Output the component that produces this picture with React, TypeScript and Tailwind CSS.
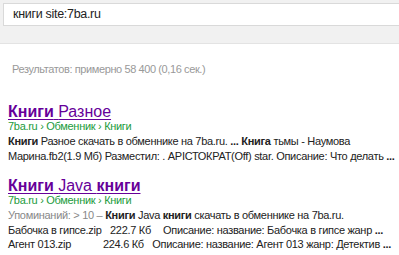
import React from "react";

const font = { fontFamily: '"Liberation Sans", Arial, sans-serif' };

function Result({
  bold,
  rest,
  children,
}: {
  bold: React.ReactNode;
  rest: React.ReactNode;
  children: React.ReactNode;
}) {
  return (
    <div className="mb-[14px]">
      <a className="block text-[16px] leading-[15px] text-[#660099] underline underline-offset-[2px] decoration-1">
        {bold} {rest}
      </a>
      <div className="text-[11px] leading-[15px] tracking-[-0.3px] text-[#219b3c]">
        7ba.ru › Обменник › Книги
      </div>
      <div className="text-[11px] leading-[15px] tracking-[-0.3px] text-[#222]">{children}</div>
    </div>
  );
}

export default function App() {
  return (
    <div className="w-[399px] h-[255px] overflow-hidden bg-white" style={font}>
      {/* search bar */}
      <div className="bg-[#f1f1f1] border-b border-[#e3e3e3] pt-[3px] pl-[3px] h-[44px]">
        <div className="h-[23px] bg-white border border-[#d9d9d9] border-r-0 pl-[9px] text-[12.5px] leading-[21px] tracking-[-0.3px] text-[#222]">
          книги site:7ba.ru
        </div>
      </div>

      <div className="px-[8px]">
        <div className="text-[11px] leading-[15px] tracking-[-0.4px] text-[#999] mt-[18px] pl-[4px]">
          Результатов: примерно 58 400 (0,16 сек.)
        </div>

        <div className="mt-[27px]">
          <Result bold={<b>Книги</b>} rest="Разное">
            <div className="whitespace-nowrap">
              <b>Книги</b> Разное скачать в обменнике на 7ba.ru. <b>...</b> <b>Книга</b> тьмы - Наумова
            </div>
            <div className="whitespace-nowrap">
              Марина.fb2(1.9 Мб) Разместил: . АРІСТОКРАТ(Off) star. Описание: Что делать <b>...</b>
            </div>
          </Result>

          <Result
            bold={<b>Книги</b>}
            rest={
              <>
                Java <b>книги</b>
              </>
            }
          >
            <div className="whitespace-nowrap">
              <span className="text-[#888]">Упоминаний: &gt; 10 – </span>
              <b>Книги</b> Java <b>книги</b> скачать в обменнике на 7ba.ru.
            </div>
            <div className="flex whitespace-nowrap leading-[14px]">
              <span className="w-[102px]">Бабочка в гипсе.zip</span>
              <span className="w-[53px]">222.7 Кб</span>
              <span>Описание: название: Бабочка в гипсе жанр <b>...</b></span>
            </div>
            <div className="flex whitespace-nowrap leading-[15px]">
              <span className="w-[102px]">Агент 013.zip</span>
              <span className="w-[53px]">224.6 Кб</span>
              <span>Описание: название: Агент 013 жанр: Детектив <b>...</b></span>
            </div>
          </Result>
        </div>
      </div>
    </div>
  );
}
